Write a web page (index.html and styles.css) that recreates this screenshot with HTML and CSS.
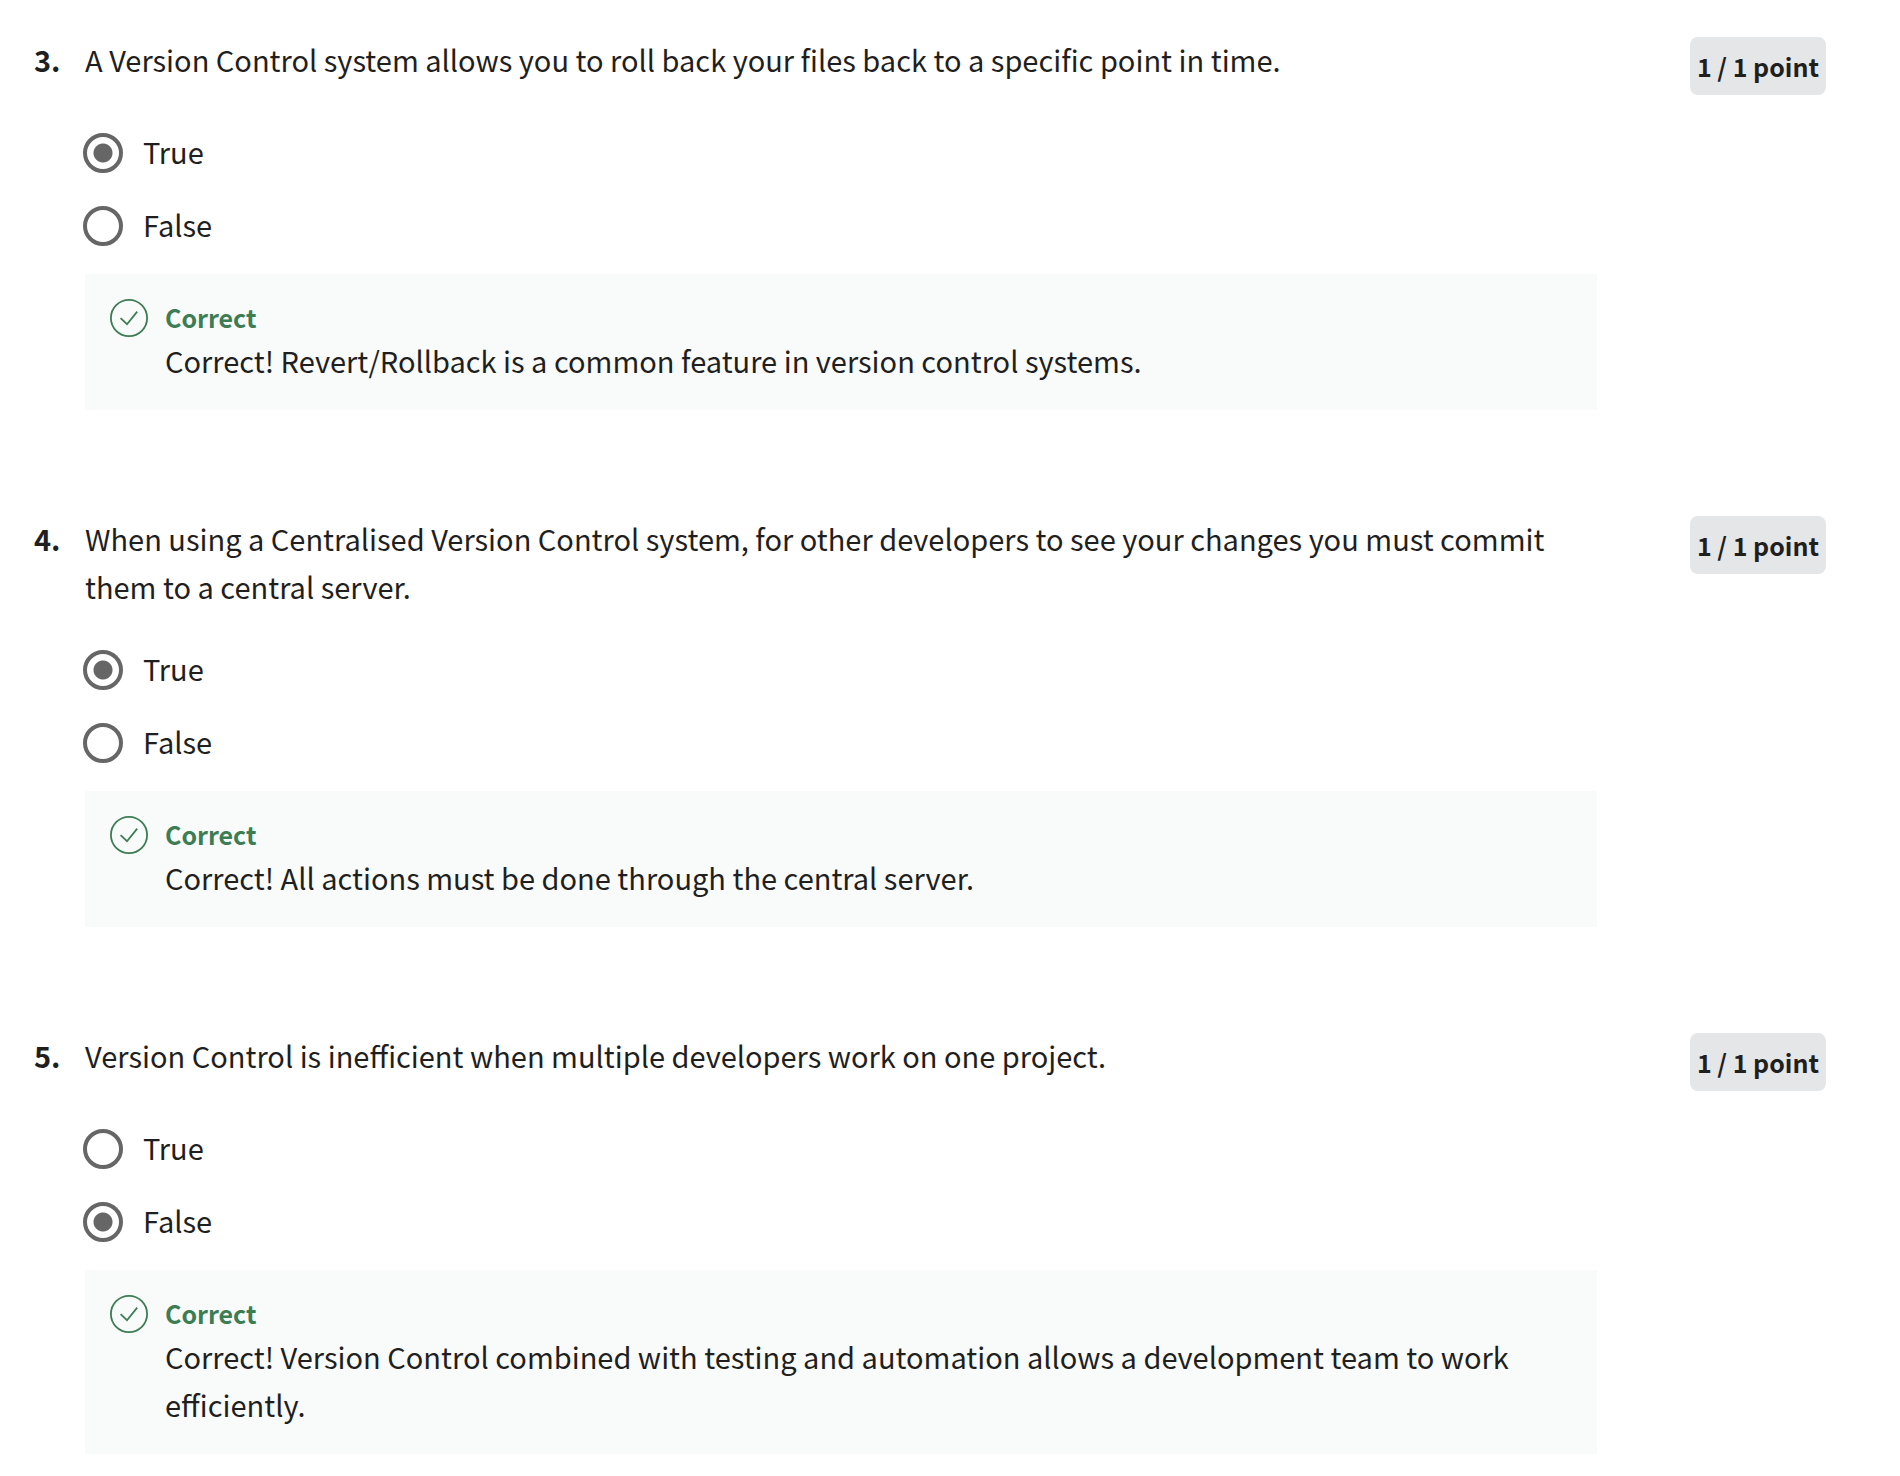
FILE: index.html
```html
<!DOCTYPE html>
<html lang="en">
<head>
<meta charset="utf-8">
<title>Version control quiz</title>
<link rel="stylesheet" href="styles.css">
</head>
<body>
<svg class="sprite" aria-hidden="true">
  <symbol id="check" viewBox="0 0 40 40">
    <circle cx="20" cy="20" r="18.1" fill="none" stroke="currentColor" stroke-width="1.8"/>
    <path d="M11.600 20.200L18 26.200L28.200 13.600" fill="none" stroke="currentColor" stroke-width="1.8"/>
  </symbol>
</svg>
<main class="quiz">
  <section class="question">
    <span class="number">3.</span>
    <div class="content">
      <fieldset class="answers">
        <legend class="prompt">A Version Control system allows you to roll back your files back to a specific point in time.</legend>
        <div class="options">
          <label class="option"><input class="radio" type="radio" name="q3" checked><span class="option-text">True</span></label>
          <label class="option"><input class="radio" type="radio" name="q3"><span class="option-text">False</span></label>
        </div>
      </fieldset>
      <div class="feedback">
        <svg class="icon" aria-hidden="true"><use href="#check"/></svg>
        <div>
          <h2 class="verdict">Correct</h2>
          <p class="message">Correct! Revert/Rollback is a common feature in version control systems.</p>
        </div>
      </div>
    </div>
    <span class="points">1 / 1 point</span>
  </section>
  <section class="question">
    <span class="number">4.</span>
    <div class="content">
      <fieldset class="answers">
        <legend class="prompt">When using a Centralised Version Control system, for other developers to see your changes you must commit them to a central server.</legend>
        <div class="options">
          <label class="option"><input class="radio" type="radio" name="q4" checked><span class="option-text">True</span></label>
          <label class="option"><input class="radio" type="radio" name="q4"><span class="option-text">False</span></label>
        </div>
      </fieldset>
      <div class="feedback">
        <svg class="icon" aria-hidden="true"><use href="#check"/></svg>
        <div>
          <h2 class="verdict">Correct</h2>
          <p class="message">Correct! All actions must be done through the central server.</p>
        </div>
      </div>
    </div>
    <span class="points">1 / 1 point</span>
  </section>
  <section class="question">
    <span class="number">5.</span>
    <div class="content">
      <fieldset class="answers">
        <legend class="prompt">Version Control is inefficient when multiple developers work on one project.</legend>
        <div class="options">
          <label class="option"><input class="radio" type="radio" name="q5"><span class="option-text">True</span></label>
          <label class="option"><input class="radio" type="radio" name="q5" checked><span class="option-text">False</span></label>
        </div>
      </fieldset>
      <div class="feedback">
        <svg class="icon" aria-hidden="true"><use href="#check"/></svg>
        <div>
          <h2 class="verdict">Correct</h2>
          <p class="message">Correct! Version Control combined with testing and automation allows a development team to work efficiently.</p>
        </div>
      </div>
    </div>
    <span class="points">1 / 1 point</span>
  </section>
</main>
</body>
</html>
```

FILE: styles.css
```css
* {
  box-sizing: border-box;
}

body {
  margin: 0;
  background: #fff;
  color: #1f1f1f;
  font-family: "Noto Sans CJK SC", "Noto Sans CJK JP", "Noto Sans", sans-serif;
  font-size: 29px;
  line-height: 48px;
}

.sprite {
  display: none;
}

.quiz {
  display: flex;
  flex-direction: column;
  gap: 104px;
  padding: 35px 74px 22px 34px;
}

.question {
  display: flex;
  align-items: flex-start;
}

.number {
  flex: none;
  width: 51px;
  font-weight: 700;
}

.content {
  flex: 1;
  margin-right: 93px;
}

.answers {
  margin: 0;
  padding: 0;
  border: 0;
}

.prompt {
  min-height: 98px;
  padding: 0 36px 40px 0;
}

.options {
  display: flex;
  flex-direction: column;
  align-items: flex-start;
  gap: 33px;
}

.option {
  display: flex;
  align-items: center;
  gap: 20px;
  height: 40px;
}

.option-text {
  padding-bottom: 4px;
}

.radio {
  appearance: none;
  width: 40px;
  height: 40px;
  margin: 0 0 0 -2px;
  border: 4px solid #666;
  border-radius: 50%;
}

.radio:checked {
  background: radial-gradient(circle, #666 9px, transparent 10px);
}

.feedback {
  display: flex;
  gap: 16px;
  margin-top: 28px;
  padding: 24px 24px 26px;
  background: #f9fbfa;
}

.icon {
  flex: none;
  width: 40px;
  height: 40px;
  color: #3d7d54;
}

.verdict {
  margin: 0;
  color: #3d7d54;
  font-size: 25px;
  font-weight: 700;
  line-height: 38px;
}

.message {
  margin: 0;
}

.points {
  flex: none;
  margin-top: 2px;
  padding: 8px 7px;
  border-radius: 8px;
  background: #e5e6e8;
  font-size: 25px;
  font-weight: 700;
  line-height: 42px;
}
```
